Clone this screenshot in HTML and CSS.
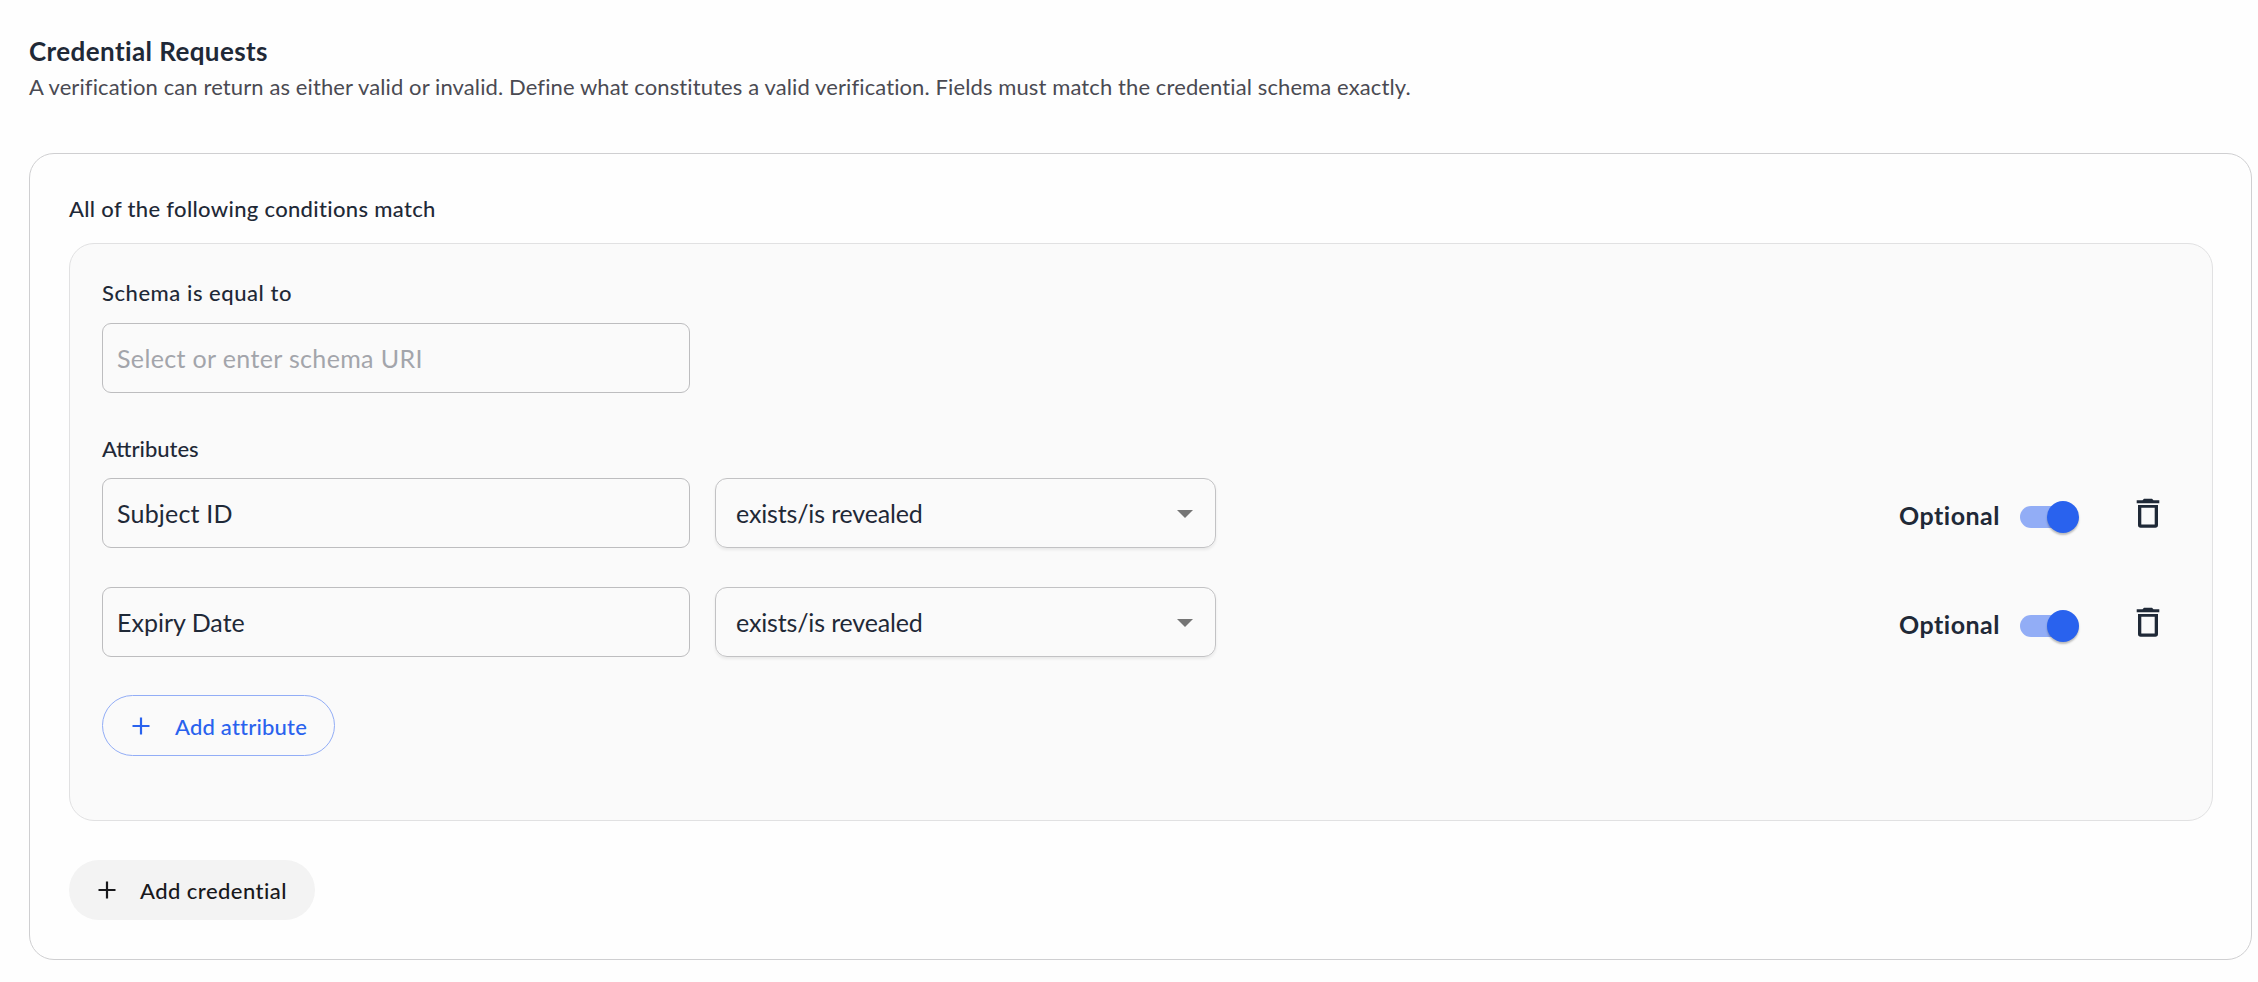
FILE: index.html
```html
<!DOCTYPE html>
<html lang="en">
<head>
<meta charset="utf-8">
<title>Credential Requests</title>
<link rel="stylesheet" href="styles.css">
</head>
<body>
<main class="page">
  <h1 class="title">Credential Requests</h1>
  <p class="description">A verification can return as either valid or invalid. Define what constitutes a valid verification. Fields must match the credential schema exactly.</p>
  <section class="card">
    <h2 class="label label-conditions">All of the following conditions match</h2>
    <div class="panel">
      <h3 class="label label-schema">Schema is equal to</h3>
      <div class="input placeholder">Select or enter schema URI</div>
      <h3 class="label label-attributes">Attributes</h3>
      <div class="rows">
        <div class="row">
          <div class="input subject">Subject ID</div>
          <div class="select"><span>exists/is revealed</span><svg class="arrow" viewBox="0 0 16 8"><path d="M0 0h16L8 8z"/></svg></div>
          <div class="actions">
            <span class="optional">Optional</span>
            <span class="switch"><span class="thumb"></span></span>
            <svg class="trash" viewBox="0 0 24 30"><path fill-rule="evenodd" d="M.7 2.300H6.500L8 .7h8L17.500 2.300h5.800v3H.7zM2 7h20v20q0 2.700-2.700 2.700H4.700Q2 29.700 2 27zM5.300 9.800v16.800h13.400V9.800z"/></svg>
          </div>
        </div>
        <div class="row">
          <div class="input">Expiry Date</div>
          <div class="select"><span>exists/is revealed</span><svg class="arrow" viewBox="0 0 16 8"><path d="M0 0h16L8 8z"/></svg></div>
          <div class="actions">
            <span class="optional">Optional</span>
            <span class="switch"><span class="thumb"></span></span>
            <svg class="trash" viewBox="0 0 24 30"><path fill-rule="evenodd" d="M.7 2.300H6.500L8 .7h8L17.500 2.300h5.800v3H.7zM2 7h20v20q0 2.700-2.700 2.700H4.700Q2 29.700 2 27zM5.300 9.800v16.800h13.400V9.800z"/></svg>
          </div>
        </div>
      </div>
      <button class="button add-attribute"><svg class="plus" viewBox="0 0 18 18"><path d="M9 .5v17M.5 9h17"/></svg><span>Add attribute</span></button>
    </div>
    <button class="button add-credential"><svg class="plus" viewBox="0 0 18 18"><path d="M9 .5v17M.5 9h17"/></svg><span>Add credential</span></button>
  </section>
</main>
</body>
</html>
```
FILE: styles.css
```css
* { box-sizing: border-box; }
body { margin: 0; background: #fefefe; color: #1f2937; font-family: Lato, "Open Sans", sans-serif; }
h1, h2, h3, p { margin: 0; }
.page { padding: 35px 6px 22px 29px; }
.title { font-size: 26px; line-height: 32px; font-weight: 700; letter-spacing: .4px; }
.description { margin-top: 4px; font-size: 22px; line-height: 32px; color: #4a4a52; letter-spacing: .11px; white-space: nowrap; }
.card { height: 807px; margin-top: 50px; padding: 42px 38px 0 39px; border: 1px solid #cfcfd1; border-radius: 25px; }
.label { font-size: 22px; line-height: 26px; font-weight: 500; }
.label-conditions { letter-spacing: .33px; }
.panel { height: 578px; margin-top: 21px; padding: 36px 52px 0 32px; background: #fafafa; border: 1px solid #e1e1e2; border-radius: 25px; }
.label-schema { letter-spacing: .55px; margin-bottom: 17px; }
.label-attributes { margin: 43px 0 16px; letter-spacing: 0; }
.input { width: 588px; height: 70px; padding-left: 14px; border: 1px solid #bdbdbf; border-radius: 9px; font-size: 25px; line-height: 68px; }
.placeholder { color: #a3a5ab; letter-spacing: .35px; }
.subject { letter-spacing: .2px; }
.rows { display: flex; flex-direction: column; gap: 39px; }
.row { display: flex; }
.select { display: flex; align-items: center; justify-content: space-between; width: 501px; height: 70px; margin-left: 25px; padding: 0 22px 0 20px; border: 1px solid #c2c2c4; border-radius: 12px; box-shadow: 0 2px 3px rgba(0,0,0,.07); font-size: 25px; line-height: 68px; letter-spacing: -.15px; }
.arrow { width: 16px; height: 8px; margin-top: 2px; fill: #757575; }
.actions { display: flex; align-items: center; margin-left: auto; }
.optional { margin-top: 3px; font-size: 25px; line-height: 32px; font-weight: 700; letter-spacing: .5px; }
.switch { display: flex; align-items: center; justify-content: flex-end; width: 56px; height: 22px; margin: 8px 0 0 20px; border-radius: 11px; background: #92adf6; }
.thumb { width: 32px; height: 32px; flex: none; margin-right: -3px; border-radius: 50%; background: #2962ee; box-shadow: 0 2px 2px rgba(0,0,0,.25); }
.trash { width: 24px; height: 30px; margin-left: 60px; fill: #1f2937; }
.button { display: flex; align-items: center; font: 500 22px/26px Lato, sans-serif; }
.plus { width: 18px; height: 18px; fill: none; stroke: currentColor; stroke-width: 2.2; }
.add-attribute { width: 233px; height: 61px; margin-top: 38px; padding: 0 0 0 29px; border: 1px solid #92adf6; border-radius: 31px; background: transparent; color: #2962ee; letter-spacing: .2px; }
.add-attribute span { margin: 3px 0 0 25px; }
.add-credential { width: 246px; height: 60px; margin-top: 39px; padding: 0 0 0 29px; border: 0; border-radius: 30px; background: #f3f3f3; color: #18181b; letter-spacing: .45px; }
.add-credential span { margin: 2px 0 0 24px; }
```
